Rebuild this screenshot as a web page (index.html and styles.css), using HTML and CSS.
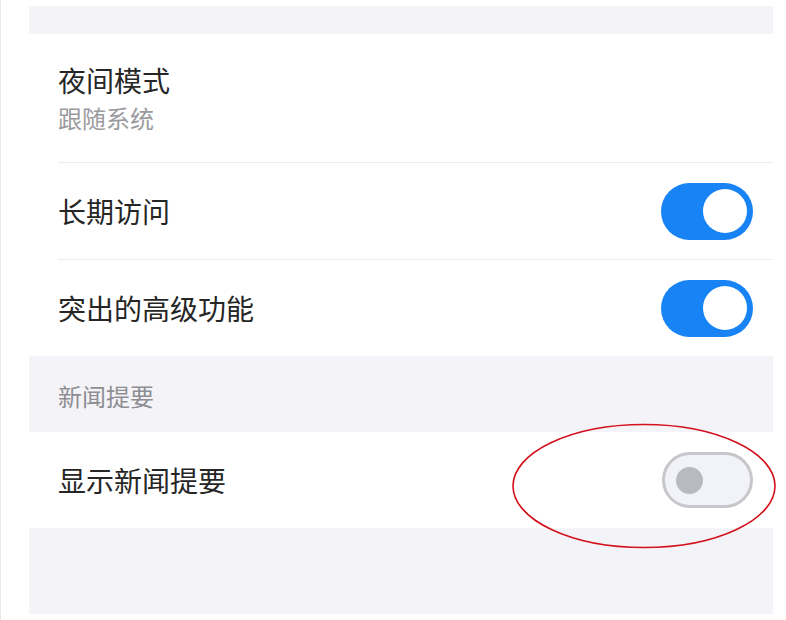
FILE: index.html
```html
<!DOCTYPE html>
<html lang="zh-CN">
<head>
<meta charset="utf-8">
<title>设置</title>
<link rel="stylesheet" href="styles.css">
</head>
<body>
<div class="page">
  <div class="panel">
    <div class="spacer-top"></div>
    <div class="group">
      <div class="cell">
        <div class="cell-inner cell-tall">
          <div class="texts">
            <div class="title">夜间模式</div>
            <div class="subtitle">跟随系统</div>
          </div>
        </div>
      </div>
      <div class="cell">
        <div class="cell-inner">
          <div class="title">长期访问</div>
          <div class="toggle on"><span class="knob"></span></div>
        </div>
      </div>
      <div class="cell">
        <div class="cell-inner last">
          <div class="title">突出的高级功能</div>
          <div class="toggle on"><span class="knob"></span></div>
        </div>
      </div>
    </div>
    <div class="section-header">新闻提要</div>
    <div class="group">
      <div class="cell">
        <div class="cell-inner last">
          <div class="title">显示新闻提要</div>
          <div class="toggle off"><span class="knob"></span></div>
        </div>
      </div>
    </div>
    <div class="spacer-bottom"></div>
  </div>
  <svg class="annotation" width="268" height="128" viewBox="0 0 268 128">
    <ellipse cx="134" cy="64" rx="131" ry="61.5" fill="none" stroke="#d3101c" stroke-width="1.6"/>
  </svg>
</div>
</body>
</html>
```

FILE: styles.css
```css
html, body {
  margin: 0;
  padding: 0;
  background: #ffffff;
}

body {
  font-family: "Noto Sans CJK SC", "Noto Sans", sans-serif;
  color: #222222;
}

.page {
  position: relative;
  width: 786px;
  height: 620px;
  box-sizing: border-box;
  border-left: 1px solid #e9e9ec;
  padding: 6px 13px 6px 28px;
}

.panel {
  width: 744px;
  background: #f4f4f8;
  display: flex;
  flex-direction: column;
}

.spacer-top {
  height: 28px;
}

.spacer-bottom {
  height: 86px;
}

.group {
  background: #ffffff;
}

.cell {
  padding-left: 29px;
}

.cell-inner {
  height: 96px;
  border-bottom: 1px solid #ececef;
  padding-right: 20px;
  display: flex;
  align-items: center;
  justify-content: space-between;
}

.cell-inner.last {
  border-bottom: none;
}

.cell-inner.cell-tall {
  height: auto;
  padding-top: 27px;
  padding-bottom: 25px;
  align-items: flex-start;
}

.texts {
  display: flex;
  flex-direction: column;
}

.title {
  font-size: 28px;
  line-height: 38px;
  color: #262626;
}

.subtitle {
  font-size: 24px;
  line-height: 38px;
  color: #9a9a9e;
}

.section-header {
  height: 76px;
  box-sizing: border-box;
  padding-left: 29px;
  display: flex;
  align-items: center;
  font-size: 24px;
  color: #8d8d92;
  padding-top: 3px;
}

.toggle {
  width: 92px;
  height: 57px;
  border-radius: 29px;
  box-sizing: border-box;
  display: flex;
  align-items: center;
  flex-shrink: 0;
}

.toggle.on {
  background: #1883f5;
  justify-content: flex-end;
  padding-right: 6px;
}

.toggle.on .knob {
  width: 44px;
  height: 44px;
  border-radius: 50%;
  background: #ffffff;
}

.toggle.off {
  width: 91px;
  height: 56px;
  background: #f2f3f8;
  border: 3px solid #c6c6cb;
  justify-content: flex-start;
  padding-left: 11px;
}

.toggle.off .knob {
  width: 27px;
  height: 27px;
  border-radius: 50%;
  background: #b9b9c0;
}

.annotation {
  position: absolute;
  left: 509px;
  top: 422px;
}
```
